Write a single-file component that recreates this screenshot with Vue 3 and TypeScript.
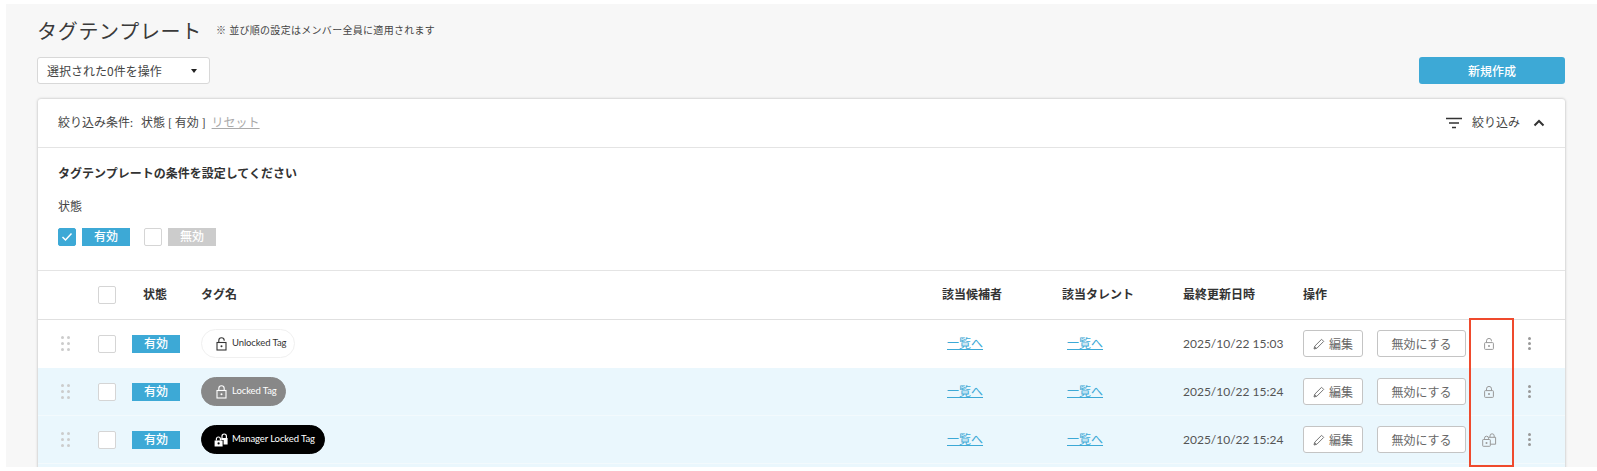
<script setup lang="ts">
interface Row { name: string; kind: 'open' | 'locked' | 'manager'; date: string }
const rows: Row[] = [
  { name: 'Unlocked Tag', kind: 'open', date: '2025/10/22 15:03' },
  { name: 'Locked Tag', kind: 'locked', date: '2025/10/22 15:24' },
  { name: 'Manager Locked Tag', kind: 'manager', date: '2025/10/22 15:24' },
]
</script>

<template>
  <div class="page">
    <div class="title-line">
      <h1 class="title">タグテンプレート</h1>
      <span class="note">※ 並び順の設定はメンバー全員に適用されます</span>
    </div>
    <div class="action-line">
      <div class="select">
        <span>選択された0件を操作</span>
        <span class="caret"></span>
      </div>
      <button class="create">新規作成</button>
    </div>
    <section class="card">
      <div class="filter-head">
        <div class="filter-summary">
          <span>絞り込み条件:</span>
          <span>状態 [ 有効 ]</span>
          <a class="reset">リセット</a>
        </div>
        <div class="filter-toggle">
          <svg class="filter-icon" width="16" height="12" viewBox="0 0 16 12">
            <path d="M0 1.5h16M3 6h10M6 10.5h4" stroke="#333" stroke-width="1.5" fill="none" />
          </svg>
          <span>絞り込み</span>
          <svg class="chevron" width="12" height="8" viewBox="0 0 12 8">
            <path d="M1.5 6.5 6 2l4.5 4.5" stroke="#333" stroke-width="2" fill="none" />
          </svg>
        </div>
      </div>
      <div class="filter-body">
        <div class="filter-title">タグテンプレートの条件を設定してください</div>
        <div class="filter-label">状態</div>
        <div class="filter-options">
          <span class="check checked">
            <svg width="12" height="10" viewBox="0 0 12 10">
              <path d="M1.5 5 4.5 8l6-6.5" stroke="#fff" stroke-width="1.5" fill="none" />
            </svg>
          </span>
          <span class="badge">有効</span>
          <span class="check second"></span>
          <span class="badge off">無効</span>
        </div>
      </div>
      <div class="grid head">
        <span></span>
        <span class="check"></span>
        <span class="head-status">状態</span>
        <span>タグ名</span>
        <span>該当候補者</span>
        <span>該当タレント</span>
        <span>最終更新日時</span>
        <span>操作</span>
      </div>
      <div v-for="(row, i) in rows" :key="row.name" class="grid row" :class="{ tint: i > 0 }">
        <span class="drag"><i v-for="n in 6" :key="n"></i></span>
        <span class="check"></span>
        <span class="badge status">有効</span>
        <span>
          <span class="pill" :class="row.kind">
            <svg v-if="row.kind === 'manager'" width="14" height="14" viewBox="0 0 14 14">
              <path d="M8 5V3.2a2.2 2.2 0 0 1 4.4 0V5M2.4 7.5V6a2 2 0 0 1 4 0v1.5" stroke="#fff" stroke-width="1.2" fill="none" />
              <path d="M7.2 5h6.4v6.5H9.6V7H7.2zM.6 7.5h8v6h-8z" fill="#fff" />
              <circle cx="4.6" cy="10.4" r="1.1" fill="#000" />
            </svg>
            <svg v-else width="11" height="14" viewBox="0 0 11 14">
              <path v-if="row.kind === 'open'" d="M2.8 5.5V3.4a2.7 2.7 0 0 1 5.4 0v.3" stroke="currentColor" stroke-width="1.1" fill="none" />
              <path v-else d="M2.8 5.5V3.4a2.7 2.7 0 0 1 5.4 0v2.1" stroke="currentColor" stroke-width="1.1" fill="none" />
              <rect x="1" y="5.5" width="9" height="7.5" stroke="currentColor" stroke-width="1.1" fill="none" />
              <circle cx="5.5" cy="9.2" r="1" fill="currentColor" />
            </svg>
            {{ row.name }}
          </span>
        </span>
        <a class="link">一覧へ</a>
        <a class="link">一覧へ</a>
        <span class="date">{{ row.date }}</span>
        <span class="ops">
          <button class="btn edit">
            <svg width="12" height="12" viewBox="0 0 12 12">
              <path d="M1 11l.7-2.8L8.6 1.3l2.1 2.1-6.9 6.9z" stroke="#777" stroke-width="1" fill="#fff" />
              <path d="M1 11l.7-2.8 2.1 2.1z" fill="#777" />
            </svg>
            編集
          </button>
          <button class="btn disable">無効にする</button>
          <span class="lock-cell">
            <svg v-if="row.kind === 'manager'" width="15" height="14" viewBox="0 0 15 14">
              <g stroke="#999" stroke-width="1" fill="none">
                <rect x=".7" y="6.5" width="7.6" height="6.8" rx=".6" />
                <path d="M2.5 6.5V5.2a2 2 0 0 1 4 0v1.3" />
                <path d="M6.4 4.3h7.2v6.9H8.3" />
                <path d="M8 4.3V2.9a2.1 2.1 0 0 1 4.2 0v1.4" />
              </g>
              <circle cx="4.5" cy="9.9" r="1" fill="#999" />
            </svg>
            <svg v-else width="10" height="12" viewBox="0 0 10 12">
              <path v-if="row.kind === 'open'" d="M2.5 4.6V2.9a2.5 2.5 0 0 1 5 0v.4" stroke="#999" stroke-width="1" fill="none" />
              <path v-else d="M2.5 4.6V2.9a2.5 2.5 0 0 1 5 0v1.7" stroke="#999" stroke-width="1" fill="none" />
              <rect x=".6" y="4.6" width="8.8" height="6.8" rx=".8" stroke="#999" stroke-width="1" fill="none" />
              <circle cx="5" cy="8" r="1" fill="#999" />
            </svg>
          </span>
          <span class="kebab"><i></i><i></i><i></i></span>
        </span>
      </div>
      <div class="row tint"></div>
    </section>
    <div class="highlight"></div>
  </div>
</template>

<style>
html, body { background: #fff; overflow: hidden; }
</style>

<style scoped>
.page {
  position: relative;
  box-sizing: border-box;
  height: 463px;
  margin: 4px 0 0 6px;
  padding: 0 32px 0 31px;
  overflow: hidden;
  background: #f7f7f7;
  color: #444;
  font: 12px/1.5 "Lato", "Noto Sans CJK JP", sans-serif;
}
.title-line { display: flex; align-items: center; height: 53px; }
.title { margin: 0; font-size: 20px; font-weight: 400; color: #3a3a3a; letter-spacing: .7px; }
.note { margin-left: 14px; font-size: 10px; letter-spacing: .3px; }
.action-line { display: flex; justify-content: space-between; height: 27px; }
.select {
  box-sizing: border-box;
  width: 173px;
  display: flex;
  align-items: center;
  justify-content: space-between;
  padding: 0 12px 0 9px;
  background: #fff;
  border: 1px solid #d8d8d8;
  border-radius: 3px;
  font-family: "Noto Sans CJK JP", sans-serif;
}
.caret { border: 3.5px solid transparent; border-top: 4px solid #222; border-bottom: 0; }
.create {
  width: 146px;
  border: 0;
  border-radius: 3px;
  background: #3da9d6;
  color: #fff;
  font: 500 12px "Noto Sans CJK JP", sans-serif;
}
.card {
  margin: 15px 0 0 1px;
  background: #fff;
  border-radius: 3px 3px 0 0;
  box-shadow: 0 0 3px rgba(0, 0, 0, .28);
}
.filter-head {
  display: flex;
  align-items: center;
  justify-content: space-between;
  height: 49px;
  padding: 0 20px;
  border-bottom: 1px solid #e4e4e4;
  box-sizing: border-box;
}
.filter-summary { display: flex; gap: 8px; }
.reset { margin-left: -2px; color: #aaa; text-decoration: underline; }
.filter-toggle { display: flex; align-items: center; }
.filter-icon { margin-right: 10px; }
.chevron { margin-left: 13px; }
.filter-body { box-sizing: border-box; height: 123px; padding: 17px 20px 0; border-bottom: 1px solid #e4e4e4; }
.filter-title { font-weight: 700; color: #333; }
.filter-label { margin-top: 15px; }
.filter-options { display: flex; align-items: center; margin-top: 12px; }
.check {
  box-sizing: border-box;
  flex: none;
  display: flex;
  align-items: center;
  justify-content: center;
  width: 18px;
  height: 18px;
  background: #fff;
  border: 1px solid #d5d5d5;
  border-radius: 2px;
}
.check.checked { background: #3da9d6; border-color: #3da9d6; }
.check.second { margin-left: 14px; }
.badge {
  box-sizing: border-box;
  width: 48px;
  height: 18px;
  margin-left: 6px;
  background: #3da9d6;
  color: #fff;
  font-size: 12px;
  font-weight: 500;
  line-height: 18px;
  text-align: center;
}
.badge.off { background: #ccc; }
.badge.status { margin-left: 0; }
.grid {
  display: grid;
  grid-template-columns: 60px 34px 69px 741px 120px 121px 120px 1fr;
  align-items: center;
}
.head {
  box-sizing: border-box;
  height: 49px;
  border-bottom: 1px solid #e0e0e0;
  font-weight: 700;
  color: #333;
}
.head-status { padding-left: 11px; }
.row { box-sizing: border-box; height: 48px; border-bottom: 1px solid #f3fafd; }
.row:not(.tint) { border-bottom-color: transparent; }
.row.tint { background: #eaf7fd; }
.drag { display: grid; grid-template-columns: 3px 3px; gap: 3px; justify-content: center; margin-right: 6px; }
.drag i { width: 3px; height: 3px; border-radius: 50%; background: #ccc; }
.pill {
  box-sizing: border-box;
  display: inline-flex;
  align-items: center;
  gap: 5px;
  height: 29px;
  padding: 0 8px 0 14px;
  border: 1px solid #f0f0f0;
  border-radius: 15px;
  background: #fff;
  color: #333;
  font-size: 9.5px;
  letter-spacing: -.1px;
  vertical-align: middle;
}
.pill.locked { background: #888; border-color: #888; color: #fff; }
.pill.manager { background: #000; border-color: #000; color: #fff; padding: 0 9px 0 12px; gap: 4px; }
.link { padding-left: 5px; color: #3da9d6; text-decoration: underline; }
.date { color: #555; font-size: 12px; }
.ops { display: flex; align-items: center; }
.btn {
  box-sizing: border-box;
  height: 27px;
  background: #fff;
  border: 1px solid #c4c4c4;
  border-radius: 3px;
  color: #666;
  font: 12px "Noto Sans CJK JP", sans-serif;
  padding: 0;
}
.edit { display: flex; align-items: center; justify-content: center; gap: 4px; width: 60px; }
.disable { width: 89px; margin-left: 14px; }
.lock-cell { width: 46px; display: flex; justify-content: center; }
.kebab { display: flex; flex-direction: column; gap: 2px; margin-left: 16px; }
.kebab i { width: 3px; height: 3px; border-radius: 50%; background: #999; }
.highlight {
  position: absolute;
  left: 1463px;
  top: 314px;
  box-sizing: border-box;
  width: 45px;
  height: 149px;
  border: 2px solid #ef4a2d;
}
</style>
